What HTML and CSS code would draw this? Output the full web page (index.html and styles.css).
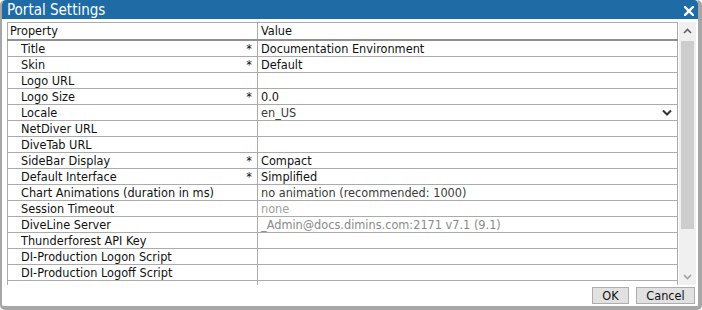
FILE: index.html
```html
<!DOCTYPE html>
<html>
<head>
<meta charset="utf-8">
<link rel="stylesheet" href="styles.css">
</head>
<body>
<div class="dialog">
  <div class="titlebar">
    <span class="title">Portal Settings</span>
    <svg class="close" width="10" height="10" viewBox="0 0 10 10"><path d="M1 1L9 9M9 1L1 9" stroke="#fff" stroke-width="2.4" stroke-linecap="square"/></svg>
  </div>
  <div class="content">
    <div class="grid">
      <div class="tablewrap">
        <table class="props">
          <thead>
            <tr><th class="c1">Property</th><th class="c2">Value</th></tr>
          </thead>
          <tbody>
            <tr><td class="c1"><span>Title</span><b>*</b></td><td class="c2">Documentation Environment</td></tr>
            <tr><td class="c1"><span>Skin</span><b>*</b></td><td class="c2">Default</td></tr>
            <tr><td class="c1"><span>Logo URL</span></td><td class="c2"></td></tr>
            <tr><td class="c1"><span>Logo Size</span><b>*</b></td><td class="c2">0.0</td></tr>
            <tr><td class="c1"><span>Locale</span></td><td class="c2 sel"><span class="dim">en_US</span><svg class="chev" width="10" height="7" viewBox="0 0 10 7"><path d="M1 1.5L5 5.5L9 1.5" fill="none" stroke="#333" stroke-width="2"/></svg></td></tr>
            <tr><td class="c1"><span>NetDiver URL</span></td><td class="c2"></td></tr>
            <tr><td class="c1"><span>DiveTab URL</span></td><td class="c2"></td></tr>
            <tr><td class="c1"><span>SideBar Display</span><b>*</b></td><td class="c2">Compact</td></tr>
            <tr><td class="c1"><span>Default Interface</span><b>*</b></td><td class="c2">Simplified</td></tr>
            <tr><td class="c1"><span>Chart Animations (duration in ms)</span></td><td class="c2 dim">no animation (recommended: 1000)</td></tr>
            <tr><td class="c1"><span>Session Timeout</span></td><td class="c2 light">none</td></tr>
            <tr><td class="c1"><span>DiveLine Server</span></td><td class="c2 grey">_Admin@docs.dimins.com:2171 v7.1 (9.1)</td></tr>
            <tr><td class="c1"><span>Thunderforest API Key</span></td><td class="c2"></td></tr>
            <tr><td class="c1"><span>DI-Production Logon Script</span></td><td class="c2"></td></tr>
            <tr><td class="c1"><span>DI-Production Logoff Script</span></td><td class="c2"></td></tr>
            <tr><td class="c1"><span></span></td><td class="c2"></td></tr>
          </tbody>
        </table>
      </div>
      <div class="scrollbar">
        <div class="arrow"><svg width="9" height="6" viewBox="0 0 9 6"><path d="M1 5L4.5 1.5L8 5" fill="none" stroke="#606060" stroke-width="1.6"/></svg></div>
        <div class="track"><div class="thumb"></div></div>
        <div class="arrow"><svg width="9" height="6" viewBox="0 0 9 6"><path d="M1 1L4.5 4.5L8 1" fill="none" stroke="#a0a0a0" stroke-width="1.6"/></svg></div>
      </div>
    </div>
    <div class="footer">
      <button class="btn ok">OK</button>
      <button class="btn cancel">Cancel</button>
    </div>
  </div>
</div>
</body>
</html>
```

FILE: styles.css
```css
html, body {
  margin: 0;
  padding: 0;
  background: #fff;
}
.dialog {
  width: 702px;
  height: 310px;
  box-sizing: border-box;
  border-style: solid;
  border-color: #a6a6a6;
  border-width: 0 4px 4px 2px;
  border-radius: 5px;
  background: #fff;
  display: flex;
  flex-direction: column;
  overflow: hidden;
  font-family: "DejaVu Sans Condensed", "DejaVu Sans", sans-serif;
  font-stretch: condensed;
}
.titlebar {
  height: 19px;
  background: #1e6ba6;
  color: #fff;
  display: flex;
  align-items: flex-start;
  justify-content: space-between;
  padding: 0 4px 0 5px;
  border-radius: 4px 4px 0 0;
  overflow: hidden;
}
.title {
  font-size: 15px;
  line-height: 19px;
  padding-top: 1px;
}
.close {
  margin-top: 6px;
}
.content {
  flex: 1;
  display: flex;
  flex-direction: column;
  padding: 3px 1px 0 5px;
}
.grid {
  display: flex;
  height: 263px;
}
.tablewrap {
  width: 671px;
  height: 263px;
  overflow: hidden;
}
.props {
  width: 671px;
  border-collapse: collapse;
  table-layout: fixed;
  font-size: 12.6px;
  color: #111;
}
.props th, .props td {
  padding: 0;
  border: 1px solid #ababab;
  white-space: nowrap;
  overflow: hidden;
  text-align: left;
  font-weight: normal;
}
.props th {
  height: 16px;
  line-height: 16px;
  border-bottom: 2px solid #909090;
  padding-left: 2px;
}
.props td {
  height: 15px;
  line-height: 15px;
}
.props .c1 {
  width: 247px;
}
.props td.c1 {
  padding: 0 5px 0 13px;
  width: auto;
}
.props td.c1 span {
  float: left;
}
.props td.c1 b {
  float: right;
  font-weight: normal;
}
.props th.c2, .props td.c2 {
  padding-left: 3px;
}
.props td.sel {
  position: relative;
}
.chev {
  position: absolute;
  right: 5px;
  top: 4px;
}
.dim { color: #3a3a3a; }
.light { color: #a0a0a0; }
.grey { color: #8a8a8a; }
.scrollbar {
  width: 17px;
  margin-left: 1px;
  background: #f0f0f0;
  display: flex;
  flex-direction: column;
}
.arrow {
  height: 17px;
  display: flex;
  align-items: center;
  justify-content: center;
}
.track {
  flex: 1;
  padding: 2px 2px 0 2px;
}
.thumb {
  height: 188px;
  background: #cdcdcd;
}
.footer {
  display: flex;
  justify-content: flex-end;
  gap: 7px;
  padding: 2px 2px 0 0;
}
.btn {
  height: 17px;
  box-sizing: border-box;
  background: #e1e1e1;
  border: 1px solid #adadad;
  font-family: "DejaVu Sans Condensed", "DejaVu Sans", sans-serif;
  font-stretch: condensed;
  font-size: 12.6px;
  color: #111;
  padding: 0;
  line-height: 15px;
}
.ok { width: 37px; }
.cancel { width: 59px; }
```
